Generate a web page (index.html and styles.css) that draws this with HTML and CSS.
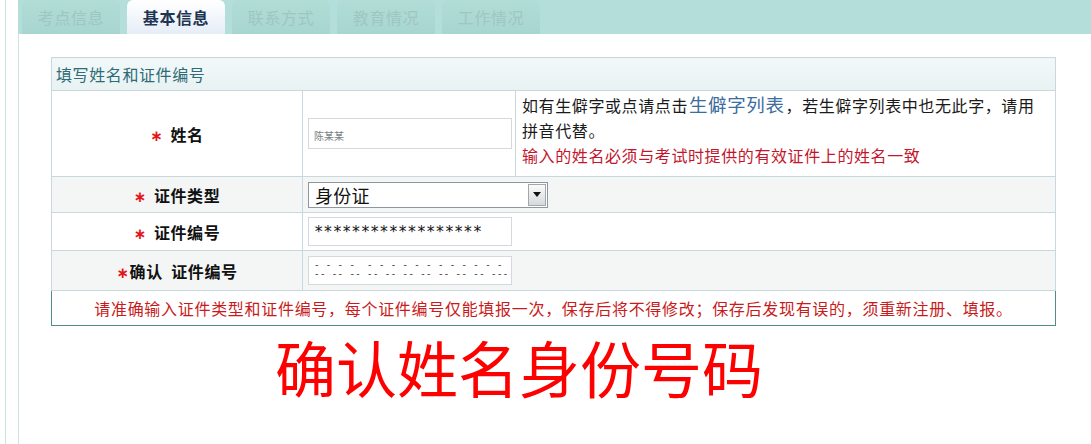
FILE: index.html
```html
<!DOCTYPE html>
<html lang="zh-CN">
<head>
<meta charset="utf-8">
<title>基本信息</title>
<link rel="stylesheet" href="styles.css">
</head>
<body>
<div class="shell">
  <div class="frame">
    <div class="main">
      <nav class="tabs">
        <span class="tab">考点信息</span>
        <span class="tab active">基本信息</span>
        <span class="tab">联系方式</span>
        <span class="tab">教育情况</span>
        <span class="tab">工作情况</span>
      </nav>
      <div class="content">
        <table class="form">
          <colgroup>
            <col class="c1"><col class="c2"><col class="c3">
          </colgroup>
          <tr class="head"><th colspan="3">填写姓名和证件编号</th></tr>
          <tr class="r-name">
            <td class="label"><span class="req">∗</span>姓名</td>
            <td class="field"><div class="input blur"><span class="scrib">陈某某</span></div></td>
            <td class="hint">
              <p class="hl"><span>如有生僻字或点请点击</span><a class="link">生僻字列表</a><span>，若生僻字列表中也无此字，请用</span></p>
              <p class="hl">拼音代替。</p>
              <p class="hl warn">输入的姓名必须与考试时提供的有效证件上的姓名一致</p>
            </td>
          </tr>
          <tr class="alt r-type">
            <td class="label"><span class="req">∗</span>证件类型</td>
            <td class="field" colspan="2">
              <div class="select"><span class="val">身份证</span><span class="btn"><span class="tri"></span></span></div>
            </td>
          </tr>
          <tr class="r-no">
            <td class="label"><span class="req">∗</span>证件编号</td>
            <td class="field" colspan="2"><div class="input mono">******************</div></td>
          </tr>
          <tr class="alt r-confirm">
            <td class="label"><span class="req tight">∗</span>确认&nbsp; 证件编号</td>
            <td class="field" colspan="2"><div class="input dashes"><span>- - - -&nbsp; - - - - - - - - - - - -</span><span>-- -- -- -- -- -- -- -- -- -- ---</span></div></td>
          </tr>
          <tr class="notice">
            <td colspan="3">请准确输入证件类型和证件编号，每个证件编号仅能填报一次，保存后将不得修改；保存后发现有误的，须重新注册、填报。</td>
          </tr>
        </table>
        <div class="big">确认姓名身份号码</div>
      </div>
    </div>
  </div>
</div>
</body>
</html>
```

FILE: styles.css
```css
* { box-sizing: border-box; }

body {
  margin: 0;
  background: #fff;
  font-family: "Noto Sans CJK SC", "Liberation Sans", sans-serif;
}

.shell {
  padding-left: 5px;
  height: 444px;
  overflow: hidden;
}

.frame {
  height: 100%;
  border-left: 1px solid #c9e5e1;
  padding-left: 12px;
}

.main {
  height: 100%;
  display: flex;
  flex-direction: column;
}

.tabs {
  height: 34px;
  flex: none;
  display: flex;
  gap: 7px;
  padding-left: 4px;
  background: #b3ded9;
}

.tab {
  width: 98px;
  display: flex;
  align-items: center;
  justify-content: center;
  font-size: 16px;
  letter-spacing: 0.6px;
  color: #9fc6c1;
  background: linear-gradient(#b2ddd7, #a7d5cf);
  border-radius: 6px 6px 0 0;
}

.tab.active {
  background: linear-gradient(#ffffff, #e6edf7);
  color: #1f3652;
  font-weight: bold;
}

.content {
  flex: 1;
  border-left: 1px solid #d3e3e3;
  padding: 23px 0 0 32px;
}

.form {
  width: 1005px;
  table-layout: fixed;
  border-collapse: collapse;
  font-size: 16px;
  letter-spacing: 0.6px;
}

.c1 { width: 251px; }
.c2 { width: 213px; }

.form td,
.form th {
  border: 1px solid #c9d8dc;
  padding: 0;
}

.head th {
  height: 33px;
  text-align: left;
  font-weight: normal;
  color: #2e6b77;
  padding-left: 4px;
  background: linear-gradient(#f2f8f9, #e8f2f3);
}

.r-name td { height: 86px; }
.r-type td { height: 36px; }
.r-no td { height: 38px; }
.r-confirm td { height: 40px; }

.alt td { background: #f4f6f6; }

.label {
  text-align: center;
  font-weight: bold;
  color: #111;
}

.req {
  color: #e3161c;
  font-family: "DejaVu Sans", sans-serif;
  font-weight: bold;
  font-size: 15px;
  margin-right: 7px;
}

.req.tight { margin-right: 0; }

.field { padding-left: 5px !important; }

.input {
  width: 204px;
  height: 29px;
  border: 1px solid #d3d9dc;
  background: #fff;
  display: flex;
  align-items: center;
  padding-left: 5px;
}

.r-name .input { height: 31px; }

.scrib {
  font-size: 10px;
  color: #7a7f86;
  letter-spacing: 0;
  margin-top: 4px;
}

.mono {
  font-family: "DejaVu Sans Mono", monospace;
  font-size: 15.5px;
  letter-spacing: 0;
  color: #111;
}

.dashes {
  flex-direction: column;
  align-items: flex-start;
  justify-content: center;
  font-family: "Liberation Mono", monospace;
  font-size: 9px;
  line-height: 9px;
  letter-spacing: 0.5px;
  color: #222;
}

.select {
  width: 240px;
  height: 26px;
  border: 1px solid #8e979e;
  background: #fff;
  display: flex;
  align-items: center;
  justify-content: space-between;
  padding-left: 6px;
}

.select .val {
  font-size: 18px;
  letter-spacing: 0.3px;
  color: #111;
}

.select .btn {
  width: 18px;
  height: 22px;
  margin-right: 1px;
  border: 1px solid #a3a7ab;
  background: linear-gradient(#fbfbfb, #d6d8da);
  display: flex;
  align-items: center;
  justify-content: center;
}

.tri {
  width: 0;
  height: 0;
  border-left: 4px solid transparent;
  border-right: 4px solid transparent;
  border-top: 5px solid #111;
}

.hint {
  vertical-align: top;
  padding: 2px 6px 0 6px !important;
  color: #1a1a1a;
}

.hl {
  margin: 0;
  line-height: 25px;
  white-space: nowrap;
}

.hint .link {
  display: inline-block;
  color: #3b6d9d;
  font-size: 18.5px;
  line-height: 22px;
  margin: 0 1px;
  cursor: pointer;
}

.hint .warn { color: #c2162d; }

.notice td {
  height: 35px;
  text-align: center;
  color: #c81c1c;
  letter-spacing: 0.7px;
  border-left: 1px solid #4f8d89;
  border-right: 1px solid #4f8d89;
  border-bottom: 1px solid #4f8d89;
}

.big {
  margin: 5px 0 0 224px;
  font-size: 61px;
  line-height: 72px;
  color: #ff0000;
  letter-spacing: 0;
}
```
